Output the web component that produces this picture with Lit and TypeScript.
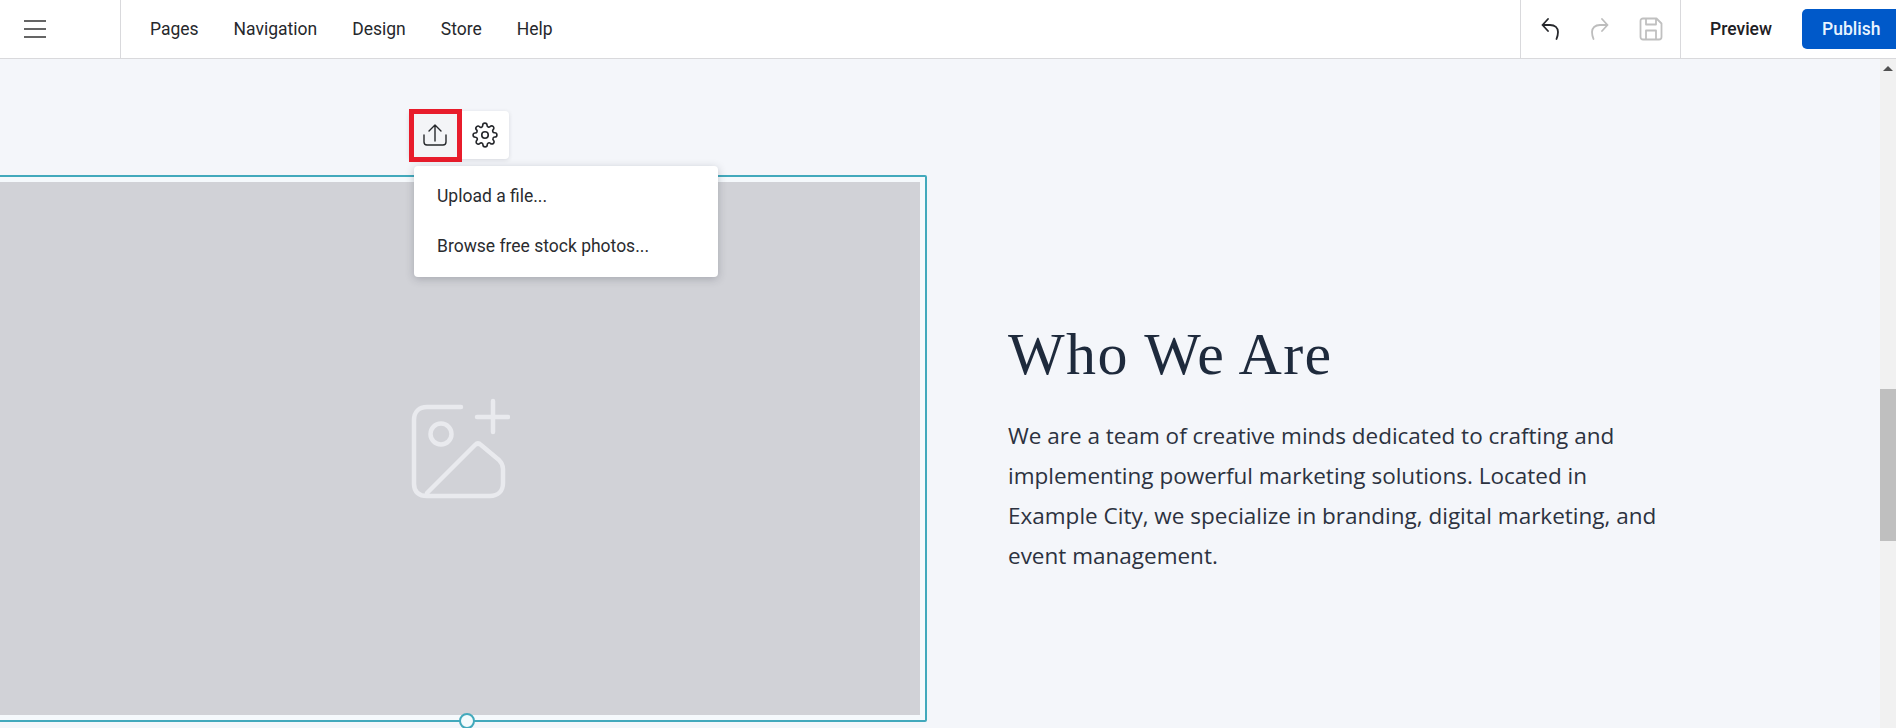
import { LitElement, html, css } from "lit";
import { customElement } from "lit/decorators.js";

@customElement("app-root")
export class AppRoot extends LitElement {
  static styles = css`
    :host { display: block; height: 728px; overflow: hidden; font-family: Roboto, "Liberation Sans", sans-serif; background: #f4f6fa; }
    .top { display: flex; align-items: stretch; height: 58px; background: #fff; border-bottom: 1px solid #d9d9dc; color: #26282c; font-size: 17.5px; }
    .burger { width: 121px; border-right: 1px solid #d9d9dc; display: flex; align-items: center; padding-left: 24px; flex: none; box-sizing: border-box; }
    .nav { display: flex; align-items: center; gap: 35px; padding-left: 29px; flex: 1; }
    .hist { width: 161px; box-sizing: border-box; border-left: 1px solid #d9d9dc; border-right: 1px solid #d9d9dc; display: flex; align-items: center; padding-left: 20px; gap: 32px; flex: none; position: relative; }
    .acts { display: flex; align-items: center; flex: none; width: 215px; padding-left: 29px; box-sizing: border-box; }
    .preview { font-weight: 500; color: #1e2024; width: 92px; flex: none; }
    .publish { background: #0059c9; color: #e9f4ff; font-weight: 500; height: 40px; flex: 1; border-radius: 5px 0 0 5px; display: flex; align-items: center; padding-left: 20px; }
    svg { display: block; fill: none; stroke-linecap: round; stroke-linejoin: round; }
    .main { position: relative; display: flex; height: 669px; overflow: hidden; }
    .canvas { flex: 1; display: flex; align-items: flex-start; padding-top: 116px; margin-left: -10px; min-width: 0; }
    .frame { width: 937px; height: 547px; box-sizing: border-box; border: 2px solid #42a9bc; border-radius: 2px; padding: 5px; background: #f5f9fc; flex: none; position: relative; }
    .photo { height: 100%; box-sizing: border-box; padding-left: 2px; background: #d1d2d7; display: flex; align-items: center; justify-content: center; }
    .handle { position: absolute; left: 467px; bottom: -9px; width: 12px; height: 12px; border: 2px solid #42a9bc; border-radius: 50%; background: #f3fbfd; }
    .copy { margin-left: 81px; width: 660px; align-self: center; margin-top: -9px; }
    h1 { font-family: "Liberation Serif", serif; font-weight: 400; font-size: 60px; letter-spacing: 1.4px; line-height: 72px; color: #1e2a3c; margin: 0 0 26px; }
    p { font-family: "Open Sans", sans-serif; font-size: 22.5px; line-height: 40px; color: #2c3240; margin: 0; }
    .bar { width: 16px; flex: none; background: #f1f1f1; position: relative; display: flex; flex-direction: column; align-items: center; padding-top: 330px; box-sizing: border-box; }
    .arrow { position: absolute; top: 7px; left: 3px; width: 0; height: 0; border-left: 5px solid transparent; border-right: 5px solid transparent; border-bottom: 5px solid #505050; }
    .thumb { width: 16px; height: 152px; background: #bfbfbf; }
    .tools { position: absolute; left: 409px; top: 52px; width: 100px; height: 48px; background: #fff; border-radius: 4px; box-shadow: 0 1px 4px rgba(40,45,60,.14); display: flex; align-items: center; }
    .up { width: 53px; height: 53px; box-sizing: border-box; border: 5px solid #e81c2b; padding-right: 2px; background: #f3f4f7; display: flex; align-items: center; justify-content: center; flex: none; }
    .gear { flex: 1; display: flex; align-items: center; justify-content: center; padding-right: 2px; }
    .menu { position: absolute; left: 414px; top: 107px; width: 304px; height: 111px; background: #fff; border-radius: 4px; box-shadow: 0 2px 8px rgba(40,45,60,.25); padding: 5px 23px; box-sizing: border-box; font-size: 17.5px; color: #2a2c30; }
    .item { height: 50px; display: flex; align-items: center; }
  `;

  render() {
    return html`
      <div class="top">
        <div class="burger">
          <svg width="22" height="18" viewBox="0 0 22 18" stroke="#333" stroke-width="1.6"><path d="M0.500 1h21M0.500 9h21M0.500 17h21" /></svg>
        </div>
        <div class="nav"><span>Pages</span><span>Navigation</span><span>Design</span><span>Store</span><span>Help</span></div>
        <div class="hist">
          <svg width="18" height="22" viewBox="0 0 18 22" stroke="#26282c" stroke-width="1.8"><path d="M7 1 1.500 7 7 13M1.500 7H9c5 0 8 3 8 7 0 2.500-.5 4.500-1.500 7" /></svg>
          <svg width="18" height="22" viewBox="0 0 18 22" stroke="#bdbdbd" stroke-width="1.8"><path d="M11 1l5.500 6L11 13M16.500 7H9C4 7 1 10 1 14c0 2.500.5 4.500 1.500 7" /></svg>
          <svg width="24" height="24" viewBox="0 0 24 24" stroke="#c0c0c0" stroke-width="1.8" style="margin-left:-2px"><path d="M4 1.500h13.500L22.500 6.500V20a2.500 2.500 0 0 1-2.500 2.500H4A2.500 2.500 0 0 1 1.500 20V4A2.500 2.500 0 0 1 4 1.500ZM7 1.500V7.500h10V1.500M7 22.500V13.500h10v9" /></svg>
        </div>
        <div class="acts"><span class="preview">Preview</span><span class="publish">Publish</span></div>
      </div>
      <div class="main">
        <div class="canvas">
          <div class="frame">
            <div class="photo">
              <svg width="100" height="102" viewBox="410 397 100 102" stroke="#e9eaee" stroke-width="4.500">
                <path d="M461 406H427c-8 0-13 5-13 13v64c0 8 5 12 13 12h63c8 0 13-5 13-13v-14c0-4-1-6-4-9l-18-15c-2-2-4-2-6 0L427 492" />
                <circle cx="441" cy="433" r="10.500" />
                <path d="M477 416h31M493 400v31" />
              </svg>
            </div>
            <div class="handle"></div>
          </div>
          <div class="copy">
            <h1>Who We Are</h1>
            <p>We are a team of creative minds dedicated to crafting and implementing powerful marketing solutions. Located in Example City, we specialize in branding, digital marketing, and event management.</p>
          </div>
        </div>
        <div class="bar"><span class="arrow"></span><div class="thumb"></div></div>
        <div class="tools">
          <div class="up">
            <svg width="24" height="22" viewBox="0 0 24 22" stroke="#26282c" stroke-width="1.400"><path d="M12 1v16M6 7l6-6 6 6M1 11v7a3 3 0 0 0 3 3h16a3 3 0 0 0 3-3v-7" /></svg>
          </div>
          <div class="gear">
            <svg width="26" height="26" viewBox="0 0 24 24" stroke="#26282c" stroke-width="1.500"><circle cx="12" cy="12" r="3" /><path d="M19.400 15a1.650 1.650 0 0 0 .33 1.820l.06.06a2 2 0 1 1-2.830 2.830l-.06-.06a1.650 1.650 0 0 0-2.800 1.170V21a2 2 0 1 1-4 0v-.09A1.650 1.650 0 0 0 7.300 19.740l-.06.06a2 2 0 1 1-2.830-2.830l.06-.06a1.650 1.650 0 0 0-1.170-2.800H3a2 2 0 1 1 0-4h.09A1.650 1.650 0 0 0 4.260 7.300l-.06-.06a2 2 0 1 1 2.830-2.830l.06.06a1.650 1.650 0 0 0 2.800-1.170V3a2 2 0 1 1 4 0v.09a1.650 1.650 0 0 0 2.800 1.170l.06-.06a2 2 0 1 1 2.830 2.830l-.06.06a1.650 1.650 0 0 0 1.170 2.800H21a2 2 0 1 1 0 4h-.09a1.650 1.650 0 0 0-1.510 1.110Z" /></svg>
          </div>
        </div>
        <div class="menu">
          <div class="item">Upload a file...</div>
          <div class="item">Browse free stock photos...</div>
        </div>
      </div>
    `;
  }
}
